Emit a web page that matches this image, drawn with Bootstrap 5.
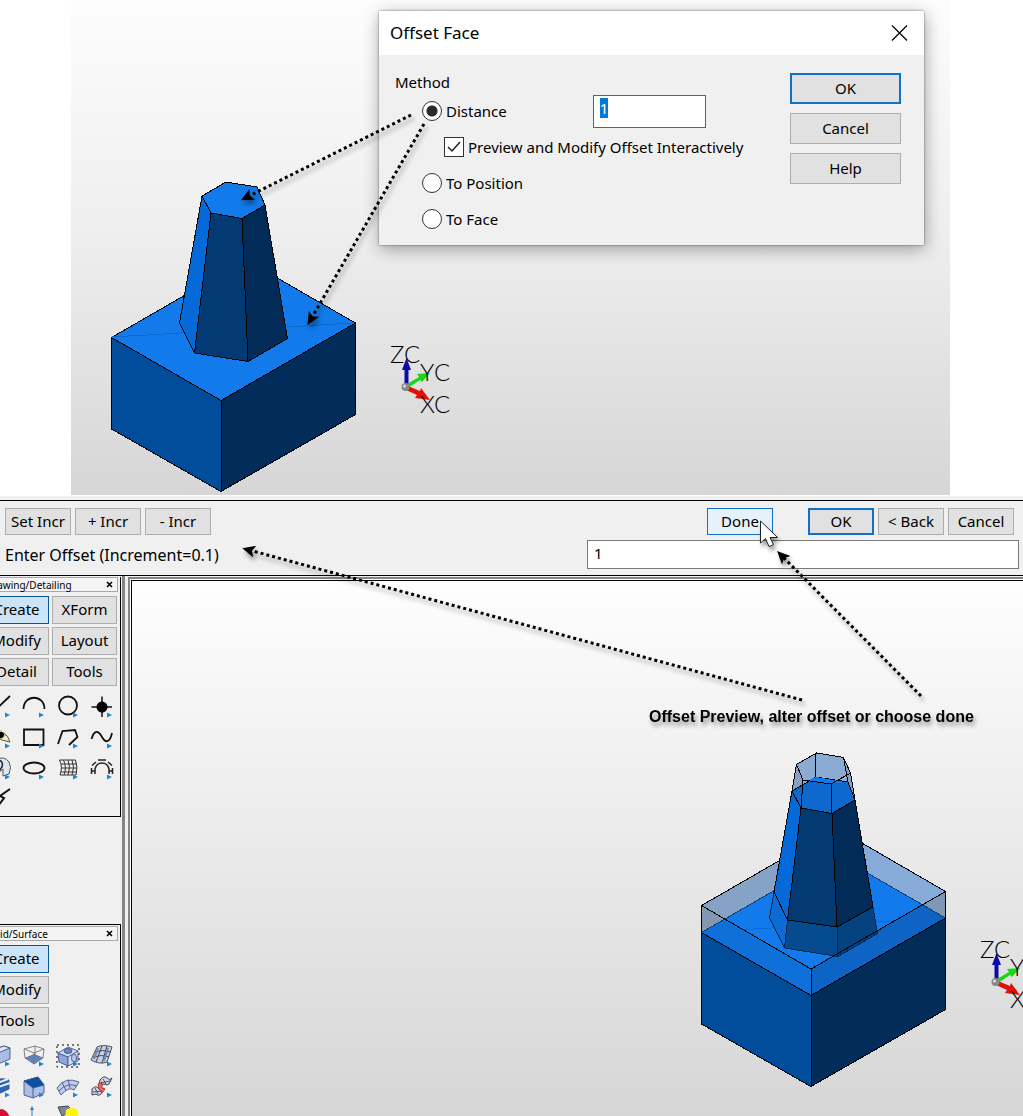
<!DOCTYPE html>
<html lang="en">
<head>
<meta charset="utf-8">
<meta name="viewport" content="width=device-width, initial-scale=1">
<title>Offset Face</title>
<link href="https://cdn.jsdelivr.net/npm/bootstrap@5.3.0/dist/css/bootstrap.min.css" rel="stylesheet">
<style>
  body { font-family: "Noto Sans", sans-serif; font-size: 15px; line-height: 20px; color: #000; background: #fff; }
  .stage { margin: 0 73px 0 71px; height: 495px; background: linear-gradient(#fdfdfd, #efefef 45%, #d6d6d6); }
  .viewport { background: linear-gradient(#fefefe, #ececec 45%, #d6d6d6); }
  .dlg { top: 11px; right: 26px; width: 545px; height: 234px; background: #f0f0f0; box-shadow: 0 0 2px rgba(0,0,0,.5), 1px 4px 16px rgba(0,0,0,.35); }
  .dlg-title { height: 44px; padding: 0 16px 0 11px; font-size: 17px; }
  .dlg-close { width: 18px; height: 18px; background: none; }
  .dlg-body { padding: 18px 23px 0 16px; }
  .legend-line { font-size: 15px; line-height: 18px; margin-bottom: 2px; }
  .opt { height: 36px; gap: 4px; padding-left: 27px; }
  .opt-sub { padding-left: 49px; }
  .tick { appearance: none; width: 20px; height: 20px; margin: 0; border: 1px solid #333; background: #fff; }
  .tick[type=radio] { border-radius: 50%; }
  .tick[type=radio]:checked { background: radial-gradient(circle, #2b2b2b 0 5px, #fff 6px); }
  .tick[type=checkbox]:checked { background: #fff url("data:image/svg+xml,%3Csvg xmlns='http://www.w3.org/2000/svg' viewBox='0 0 18 18'%3E%3Cpath d='M3 9l4 4 8-9' fill='none' stroke='%23222' stroke-width='1.5'/%3E%3C/svg%3E"); }
  .dist-field { width: 113px; height: 33px; padding: 0 6px 7px; border: 1px solid #1a76b8; outline: 0; margin-left: 82px; }
  .dist-field::selection { background: #0078d7; color: #fff; }
  .dlg-actions { width: 111px; gap: 9px; }
  .wbtn { height: 27px; padding: 0 0 2px; font-size: 15px; line-height: 20px; color: #000; background: #e1e1e1; border: 1px solid #adadad; border-radius: 0; }
  .dlg-actions .wbtn { height: 31px; }
  .wbtn.is-default { border: 2px solid #1171c8; }
  .wbtn.is-hover { background: #e5f1fb; border-color: #1171c8; }
  .wbtn.is-on { background: #cce4f7; border-color: #0a5499; }
  .app { background: #f0f0f0; margin-top: 1px; }
  .cmdbar { border-top: 1px solid #000; border-bottom: 1px solid #000; margin-top: 4px; height: 76px; padding: 7px 4px 6px 5px; }
  .cmdbar .wbtn { width: 66px; }
  .cmdbar label { font-size: 16px; }
  .cmd-row { padding-right: 5px; }
  .gap-tool { gap: 4px; }
  .done-gap { margin-right: 31px; }
  .prompt-field { width: 432px; height: 29px; padding: 0 6px 3px; border: 1px solid #7a7a7a; background: #fff; }
  .dock { width: 125px; border-right: 3px solid #858585; }
  .palette { width: 137px; margin-left: -16px; border-right: 1px solid #000; }
  .palette-a { height: 240px; border-bottom: 1px solid #000; }
  .palette-b { margin-top: 107px; border-top: 1px solid #000; }
  .palette-title { height: 15px; margin: 1px 2px 0 0; font-size: 10px; line-height: 12px; border: 1px solid #a8a8a8; border-left: 0; background: #f4f4f4; padding: 0 4px 0 2px; }
  .palette-x { width: 7px; height: 7px; background: none; }
  .tabs { display: grid; grid-template-columns: 65px 65px; gap: 3px; padding-top: 4px; }
  .tabs .wbtn { height: 28px; }
  .tools { display: grid; grid-template-columns: repeat(4, 24px); gap: 7px 10px; margin: 9px 0 0 4px; }
  .tools button { width: 24px; height: 24px; background: none; }
  .tools svg { overflow: visible; }
  .frame { margin: 1px 0 0 3px; border-left: 2px solid #858585; border-top: 2px solid #858585; }
  .frame-in { border-left: 1px solid #fff; border-top: 1px solid #fff; }
  .viewport { border-left: 1px solid #000; border-top: 1px solid #000; }
  .axis { font-family: Lato, sans-serif; font-weight: 300; font-size: 24px; }
  .note { font-family: "Liberation Sans", Arial, sans-serif; font-weight: 700; font-size: 16px; }
  .overlay { pointer-events: none; filter: drop-shadow(2px 4px 2px rgba(0,0,0,.4)); }
</style>
<script src="https://cdn.jsdelivr.net/npm/bootstrap@5.3.0/dist/js/bootstrap.bundle.min.js"></script>
</head>
<body class="vh-100 d-flex flex-column overflow-hidden position-relative">

<section class="stage position-relative flex-shrink-0">
  <svg class="w-100 h-100 d-block" viewBox="71 0 879 495" preserveAspectRatio="xMinYMin slice" role="img" aria-label="Solid model">
    <g stroke="#000" stroke-width="1" stroke-linejoin="round" shape-rendering="crispEdges">
      <path fill="#127aea" d="M111.500 337.500L246 260L355.500 323L221 400.500Z"/>
      <path d="M112 337L355 323" stroke="#0c69cf"/>
      <path fill="#024d9b" d="M111.500 337.500L221 400.500V491.500L111.500 429Z"/>
      <path fill="#022c59" d="M221 400.500L355.500 323V414.500L221 491.500Z"/>
      <path fill="#056ad8" d="M202 196L211 213L194.500 353L179.500 323Z"/>
      <path fill="#043a73" d="M211 213L242 218.500L248 361.500L194.500 353Z"/>
      <path fill="#022b57" d="M242 218.500L265 205L287.500 338.500L248 361.500Z"/>
      <path fill="#127aea" d="M202 196L226 182L257 187L265 205L242 218.500L211 213Z"/>
    </g>
    <g id="triad">
      <path d="M404.500 386V370H402L406.500 358L411 370H408.500V386Z" fill="#0a0aa8"/>
      <path d="M407 384L419 377L417 374L430 373L422 382L420 380L408 388Z" fill="#16d816"/>
      <path d="M408 386L420 391L421 388L430 400L415 398L417 395L406 390Z" fill="#e01208"/>
      <circle cx="405.500" cy="387" r="4" fill="#888"/><circle cx="404.500" cy="386" r="1.500" fill="#ddd"/>
      <g class="axis"><text x="390" y="363">Z</text><text x="404" y="363">C</text><text x="420" y="381">Y</text><text x="434" y="381">C</text><text x="420" y="413">X</text><text x="434" y="413">C</text></g>
    </g>
  </svg>

  <form class="dlg position-absolute" aria-label="Offset Face">
    <div class="dlg-title bg-white d-flex align-items-center justify-content-between">
      <span>Offset Face</span>
      <button type="button" class="dlg-close border-0 p-0 d-flex" aria-label="Close">
        <svg width="18" height="18" viewBox="0 0 18 18"><path d="M2 1.500L17 16.500M17 1.500L2 16.500" stroke="#000" stroke-width="1.200"/></svg>
      </button>
    </div>
    <div class="dlg-body d-flex justify-content-between">
      <fieldset class="flex-grow-1">
        <legend class="legend-line">Method</legend>
        <div class="opt d-flex align-items-center">
          <input class="tick" type="radio" name="method" id="m1" checked><label for="m1">Distance</label>
          <input class="dist-field" id="dist" value="1" aria-label="Distance value">
        </div>
        <div class="opt opt-sub d-flex align-items-center">
          <input class="tick" type="checkbox" id="pv" checked><label for="pv">Preview and Modify Offset Interactively</label>
        </div>
        <div class="opt d-flex align-items-center">
          <input class="tick" type="radio" name="method" id="m2"><label for="m2">To Position</label>
        </div>
        <div class="opt d-flex align-items-center">
          <input class="tick" type="radio" name="method" id="m3"><label for="m3">To Face</label>
        </div>
      </fieldset>
      <div class="dlg-actions d-flex flex-column">
        <button type="button" class="btn wbtn is-default">OK</button>
        <button type="button" class="btn wbtn">Cancel</button>
        <button type="button" class="btn wbtn">Help</button>
      </div>
    </div>
  </form>
</section>

<main class="app flex-grow-1 d-flex flex-column overflow-hidden">
  <div class="cmdbar flex-shrink-0 d-flex flex-column justify-content-between">
    <div class="cmd-row d-flex justify-content-between">
      <div class="d-flex gap-tool">
        <button type="button" class="btn wbtn">Set Incr</button>
        <button type="button" class="btn wbtn">+ Incr</button>
        <button type="button" class="btn wbtn">- Incr</button>
      </div>
      <div class="d-flex gap-tool">
        <button type="button" class="btn wbtn is-hover done-gap">Done</button>
        <button type="button" class="btn wbtn is-default">OK</button>
        <button type="button" class="btn wbtn">&lt; Back</button>
        <button type="button" class="btn wbtn">Cancel</button>
      </div>
    </div>
    <div class="d-flex justify-content-between align-items-center">
      <label for="prompt">Enter Offset (Increment=0.1)</label>
      <input class="prompt-field" id="prompt" value="1">
    </div>
  </div>

  <div class="flex-grow-1 d-flex overflow-hidden">
    <aside class="dock flex-shrink-0 overflow-hidden">
      <div class="palette palette-a">
        <div class="palette-title d-flex align-items-center justify-content-between"><span>Drawing/Detailing</span>
          <button type="button" class="palette-x border-0 p-0 d-flex" aria-label="Close"><svg width="7" height="7" viewBox="0 0 7 7"><path d="M1 1L6 6M6 1L1 6" stroke="#000" stroke-width="1.600"/></svg></button></div>
        <div class="tabs">
          <button type="button" class="btn wbtn is-on">Create</button><button type="button" class="btn wbtn">XForm</button>
          <button type="button" class="btn wbtn">Modify</button><button type="button" class="btn wbtn">Layout</button>
          <button type="button" class="btn wbtn">Detail</button><button type="button" class="btn wbtn">Tools</button>
        </div>
        <div class="tools" id="draw-tools"></div>
      </div>
      <div class="palette palette-b h-100">
        <div class="palette-title d-flex align-items-center justify-content-between"><span>Solid/Surface</span>
          <button type="button" class="palette-x border-0 p-0 d-flex" aria-label="Close"><svg width="7" height="7" viewBox="0 0 7 7"><path d="M1 1L6 6M6 1L1 6" stroke="#000" stroke-width="1.600"/></svg></button></div>
        <div class="tabs">
          <button type="button" class="btn wbtn is-on">Create</button><span></span>
          <button type="button" class="btn wbtn">Modify</button><span></span>
          <button type="button" class="btn wbtn">Tools</button><span></span>
        </div>
        <div class="tools" id="solid-tools"></div>
      </div>
    </aside>
    <div class="frame flex-grow-1 d-flex overflow-hidden">
      <div class="frame-in flex-grow-1 d-flex overflow-hidden">
        <div class="viewport flex-grow-1 overflow-hidden">
          <svg class="w-100 h-100 d-block" viewBox="132 581 891 535" preserveAspectRatio="xMaxYMin slice" role="img" aria-label="Offset preview model">
            <g stroke-linejoin="round" shape-rendering="crispEdges">
              <!-- translucent walls behind the solid -->
              <path fill="#86a3c5" d="M701.500 905.500L836 828L836 855L701.500 932.500Z"/>
              <path fill="#87abd8" d="M836 828L945.500 891.500V918L836 855Z"/>
              <path fill="#127aea" d="M701.500 932.500L836 855L945.500 918L811 995.500Z"/>
              <path fill="#8298b0" d="M701.500 905.500L724 919L701.500 932.500Z"/>
              <path fill="#8097b3" d="M945.500 891.500L922 905L945.500 918Z"/>
              <path d="M702 932L945 918" stroke="#0c69cf"/>
              <path fill="#0f70da" d="M724 919.500L811 969V995.500L701.500 932.500Z"/>
              <path fill="#0e64c5" d="M811 969L922 904.500L945.500 918L811 995.500Z"/>
              <path fill="none" stroke="#123f78" d="M701.500 932.500L836 855L945.500 918"/>
              <path fill="#024d9b" stroke="#000" d="M701.500 932.500L811 995.500V1086.500L701.500 1024Z"/>
              <path fill="#022c59" stroke="#000" d="M811 995.500L945.500 918V1009.500L811 1086.500Z"/>
              <path fill="none" stroke="#000" d="M701.500 932.500V905.500L836 828L945.500 891.500V918"/>
              <!-- tower foot inside the preview -->
              <g stroke="#05264b">
                <path fill="#0c6bd4" d="M774 892L787.500 920L784.500 948L769.500 918Z"/>
                <path fill="#064a90" d="M787.500 920L837 927L838 956.500L784.500 948Z"/>
                <path fill="#054280" d="M837 927L873 907L877.500 933.500L838 956.500Z"/>
              </g>
              <path fill="none" stroke="#000" d="M701.500 905.500L811 969L945.500 891.500M811 969V996"/>
              <!-- tower cap preview -->
              <path fill="#8babd3" d="M796.500 764.500L816.500 753L843.500 757.500L850.500 773L855 800L801 808L792 791Z"/>
              <path fill="#88a2c4" d="M796.500 764.500L803 780L801 808L792 791ZM843.500 757.500L850.500 773L855 800L848 782Z"/>
              <g stroke="#000">
                <path fill="#056ad8" d="M792 791L801 808L787.500 920L774 892Z"/>
                <path fill="#043a73" d="M801 808L832 813.500L837 927L787.500 920Z"/>
                <path fill="#022b57" d="M832 813.500L855 800L873 907L837 927Z"/>
                <path fill="#0f68ce" d="M792 791L816 777L848 782L855 800L832 813.500L801 808Z"/>
                <path fill="#127aea" stroke="none" d="M806 781L816 777L845 782L831 784Z"/>
                <path fill="none" d="M796.500 764.500L816.500 753L843.500 757.500L850.500 773L831 784L803 780ZM796.500 764.500L792 791M850.500 773L855 800M803 780L801 808M831 784L832 813M815.500 753V777M843.500 757.500L848 782"/>
              </g>
            </g>
            <use href="#triad" x="590" y="595"/>
          </svg>
        </div>
      </div>
    </div>
  </div>
</main>

<!-- pointer and callout arrows lie over both windows -->
<svg class="overlay position-absolute top-0 start-0 w-100" viewBox="0 0 1023 1116" aria-hidden="true">
  <defs><marker id="tip" viewBox="0 0 14 12" refX="7" refY="6" markerWidth="14" markerHeight="12" markerUnits="userSpaceOnUse" orient="auto"><path d="M1 0L14 6L1 12L4 6Z"/></marker></defs>
  <g stroke="#000" stroke-width="3" stroke-dasharray="3 3" fill="none">
    <path d="M411 115L247 197" marker-end="url(#tip)"/>
    <path d="M424 124L311 319" marker-end="url(#tip)"/>
    <path d="M802 700L249 550" marker-end="url(#tip)"/>
    <path d="M921 696L782 556" marker-end="url(#tip)"/>
  </g>
  <text class="note" x="649" y="722">Offset Preview, alter offset or choose done</text>
</svg>
<svg class="overlay position-absolute top-0 start-0 w-100" viewBox="0 0 1023 1116" aria-hidden="true">
  <path d="M760.500 521V543L765.500 538.500L769 546.500L773.500 544.500L770 537.500L777.500 537.500Z" fill="#fff" stroke="#222"/>
</svg>

<script>
  // Glyphs are drawn on a 24 x 24 grid; a blue flyout mark is added to each.
  const flyout = '<path d="M17 17.500l5 2.500-5 2.500z" fill="#1c86d1"/>';
  const line = d => `<path d="${d}" fill="none" stroke="#111" stroke-width="1.800"/>`;
  const draw = [
    ['Line', line('M2 20L22 1')],
    ['Arc', line('M1.500 14C1.500-1 22.500-1 22.500 14')],
    ['Circle', '<circle cx="12" cy="10.500" r="9" fill="none" stroke="#111" stroke-width="1.800"/>'],
    ['Point', '<path d="M1.500 12H22M12 1.500V22" stroke="#111" stroke-width="1.500"/><circle cx="12" cy="12" r="5.500"/>'],
    ['Fillet', '<path d="M5 8Q18 2 22 16L14 14Z" fill="#eeeec0" stroke="#555"/><path d="M8 9H18M13 4V14" stroke="#990"/><circle cx="13" cy="9" r="3"/>'],
    ['Rectangle', line('M2 3.500H21.500V19H2Z')],
    ['Polyline', line('M2 18L6.500 5L19 4L21.500 11L13 19')],
    ['Spline', line('M1.500 13C4 4 8 4 12 11S20 16 22 7')],
    ['Curve', '<path d="M8 3Q16-2 21 5Q24 10 21 17L15 19V12L9 17" fill="#dde6f3" stroke="#555"/><path d="M8 3Q16 3 14 10L9 17" fill="none" stroke="#222" stroke-width="1.500"/>'],
    ['Ellipse', '<ellipse cx="12" cy="11" rx="10.500" ry="5.500" fill="none" stroke="#111" stroke-width="1.800"/>'],
    ['Hatch', '<path d="M3.500 3H19.500Q22 10 20 18H4Q7 10 3.500 3ZM7.500 3Q11 10 8 18M12 3Q15 10 12 18M16 3Q19 10 16 18M5 7H21M5.500 11H21M5 15H21" fill="none" stroke="#333"/>'],
    ['Offset', '<path d="M5 17V12C7 4 17 4 19 12V17" fill="none" stroke="#222" stroke-width="1.500"/><path d="M1.500 17V11M2 8.500L6 5M8 3H16M18 5L22 8.500M22.500 11V17M1.500 14H5M19 14H22.500" fill="none" stroke="#222" stroke-width="1.500"/>'],
    ['Leader', '<path d="M22 1L12 8L16 10L10 18" fill="none" stroke="#111" stroke-width="2"/>', true]
  ];
  const S = 'stroke="#445582" stroke-width=".9"';
  const solid = [
    ['Block', `<path d="M2 7L16 2L22 4V15L10 20L2 18Z" fill="#a9bbe8" ${S}/><path d="M2 7L10 9L22 4L16 2Z" fill="#dbe4fa" ${S}/>`],
    ['Extrude', `<path d="M3 14L12 10L21 14L12 20Z" fill="#5f83c8"/><path d="M2 5L13 2L22 5L12 9ZM2 5L3 14L12 20L21 14L22 5M12 9V20M13 2V11L3 14M13 11L21 14" fill="none" stroke="#777" stroke-width=".9"/>`],
    ['Shell', `<path d="M1 1H23V23H1Z" fill="#eef1f8" stroke="#000" stroke-dasharray="2 3"/><path d="M2 9L12 13V22L3 18Z" fill="#8ea6dc" ${S}/><path d="M2 9L12 3L22 7V17L12 22V13Z" fill="#d2dcf5" ${S}/><path d="M12 13L22 7" ${S}/><ellipse cx="12" cy="7" rx="4" ry="2.500" fill="#6787c7" ${S}/><ellipse cx="18" cy="14" rx="2.500" ry="4" fill="#b8c8ee" ${S}/>`],
    ['Mesh', `<path d="M7 3Q13 0 22 3L17 18Q10 21 1 16Z" fill="#c3cfea" stroke="#444" stroke-width=".9"/><path d="M12 2L6 18M17 2L12 19M5 8Q12 5 21 8M3 13Q12 10 19 13" fill="none" stroke="#444"/><path d="M8 4L4 15M18 4L14 17" stroke="#6f86bd" stroke-width="2"/>`],
    ['Cylinder', `<path d="M4 9Q10 1 21 5V14L8 20L3 17Z" fill="#2c65b4" ${S}/><path d="M4 10L20 4M5 14L22 8" stroke="#e5efff" stroke-width="2"/>`],
    ['Chamfer', `<path d="M2 6L2 20L11 23L22 18V10L16 2Z" fill="#a9bde9" ${S}/><path d="M2 6L16 2L22 10L11 13Z" fill="#0c4fa3" ${S}/><path d="M11 13V23" ${S}/>`],
    ['Sweep', `<path d="M1 13Q9 1 23 7L18 15Q13 11 5 20Z" fill="#bfccec" ${S}/><path d="M3 16Q11 7 21 11M6 7.500L10 15.500M12 4.500L14 13" fill="none" stroke="#53638f"/>`],
    ['Blend', `<path d="M10 5Q14 0 17 3T22 3L19 9Q17 11 14 9L9 11Z" fill="#cbd6f0" stroke="#444"/><path d="M2 14Q6 10 8 13T14 13L11 19Q8 22 6 19L2 20Z" fill="#cbd6f0" stroke="#444"/><path d="M8 9L12 7V13L15 14L12 18L9 14Z" fill="#e76a6a" stroke="#b33"/><path d="M13 4L16 9M11 8L20 6M5 13L8 19M3 17L12 16" stroke="#555"/>`],
    ['Revolve', '<path d="M10 10Q10 3 14 3Q20 5 22 12H10Z" fill="#d01030"/>'],
    ['Axis', '<path d="M10 14V3" stroke="#2a7bd4"/><path d="M8 4L10 0L12 4Z" fill="#2a7bd4"/>'],
    ['Light', '<path d="M2 1L12 0L17 5L6 10Z" fill="#789" stroke="#445"/><path d="M10 4Q17-1 22 5Q24 10 18 14L9 12Z" fill="#fff21a"/>']
  ];
  const fill = (id, list) => {
    document.getElementById(id).innerHTML = list.map(([name, art, plain]) =>
      `<button type="button" class="border-0 p-0 d-flex" aria-label="${name}"><svg width="24" height="24" viewBox="0 0 24 24">${art}${plain ? '' : flyout}</svg></button>`).join('');
  };
  fill('draw-tools', draw);
  fill('solid-tools', solid);
  const dist = document.getElementById('dist');
  dist.focus({ preventScroll: true });
  dist.select();
</script>
</body>
</html>
